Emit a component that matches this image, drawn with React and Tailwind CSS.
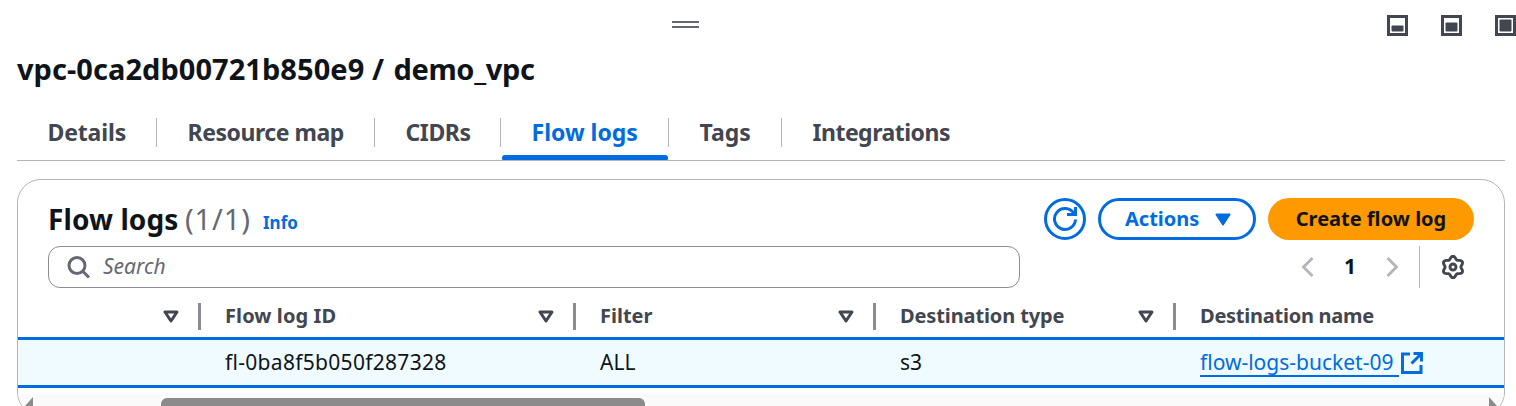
import React from "react";

const tabs = [
  { label: "Details", cell: "w-[140px]", text: "tracking-[-0.15px]" },
  { label: "Resource map", cell: "w-[218px]", text: "tracking-[-0.45px]" },
  { label: "CIDRs", cell: "w-[126px]", text: "tracking-[-0.4px]" },
  { label: "Flow logs", cell: "w-[168px]", text: "tracking-normal", active: true },
  { label: "Tags", cell: "w-[113px]", text: "tracking-normal" },
  { label: "Integrations", cell: "w-[200px]", text: "tracking-[-0.5px]" },
];

const columns = [
  { label: "Flow log ID", cell: "w-[375px]", text: "tracking-[0.1px]" },
  { label: "Filter", cell: "w-[300px]", text: "tracking-normal" },
  { label: "Destination type", cell: "w-[300px]", text: "tracking-[-0.12px]" },
];

// Six-lobed gear outline, one lobe pointing straight up.
const gearPath =
  Array.from({ length: 72 }, (_, i) => {
    const a = (i / 72) * Math.PI * 2;
    const r = 9.3 + 1.4 * Math.cos(6 * a);
    return `${i ? "L" : "M"}${(13 + r * Math.sin(a)).toFixed(2)} ${(13 - r * Math.cos(a)).toFixed(2)}`;
  }).join("") + "Z";

function PanelIcon({ top }) {
  return (
    <svg width="21" height="21" viewBox="0 0 21 21" className="shrink-0">
      <rect x="1.5" y="1.5" width="18" height="18" fill="none" stroke="#424650" strokeWidth="3" />
      <rect x="4.5" y={top} width="12" height={16.5 - top} rx="1" fill="#424650" />
    </svg>
  );
}

function SortIcon() {
  return (
    <svg width="16" height="13" viewBox="0 0 16 13" fill="none" stroke="#424650" strokeWidth="3" strokeLinejoin="round" className="mr-[19px] shrink-0">
      <path d="M2 2h12L8 11z" />
    </svg>
  );
}

function Divider() {
  return <div className="h-[27px] w-[3px] shrink-0 bg-[#8c8c94]" />;
}

export default function App() {
  return (
    <div className="h-[406px] w-[1516px] overflow-hidden bg-white font-['Noto_Sans',sans-serif] whitespace-nowrap text-[#0f141a]">
      <header className="flex h-[48px] items-start pl-[672px]">
        <div className="mt-[21px] h-[7px] w-[27px] border-t-2 border-b-2 border-[#656871]" />
        <div className="mt-[15px] ml-[688px] flex gap-[33px]">
          <PanelIcon top={10.5} />
          <PanelIcon top={7.5} />
          <PanelIcon top={4.5} />
        </div>
      </header>

      <h1 className="flex h-[42px] items-center pl-[17px] text-[29px] font-bold">
        <span className="w-[355px] tracking-[0.05px]">vpc-0ca2db00721b850e9</span>
        <span className="w-[21.5px]">/</span>
        <span className="tracking-[-0.35px]">demo_vpc</span>
      </h1>

      <nav className="mr-[11px] ml-[17px] flex h-[71px] items-end border-b border-[#b4b4bb]">
        {tabs.map((t) => (
          <div key={t.label} className={`${t.cell} flex h-[42px] shrink-0 flex-col justify-between`}>
            <div className={`flex h-[29px] items-center border-r pl-[30.5px] text-[23px] font-bold ${t.text} ${t.label === "Integrations" ? "border-transparent" : "border-[#b4b4bb]"} ${t.active ? "text-[#006ce0]" : "text-[#424650]"}`}>
              {t.label}
            </div>
            {t.active && <div className="mr-px ml-px h-[5px] rounded-t-[3px] rounded-b-[1px] bg-[#006ce0]" />}
          </div>
        ))}
      </nav>

      <section className="mt-[18px] mr-[11px] ml-[17px] h-[237px] overflow-hidden rounded-[24px] border border-[#b4b4bb]">
        <div className="mt-[18px] flex h-[42px] items-center pr-[30px] pl-[30px]">
          <h2 className="w-[137px] text-[28px] font-bold tracking-[0.1px]">Flow logs</h2>
          <span className="w-[67px] text-[29px] tracking-[0.9px] text-[#656871]">(1/1)</span>
          <span className="mt-[7px] ml-[11px] text-[17px] font-bold text-[#006ce0]">Info</span>
          <div className="ml-auto flex gap-[12px]">
            <button className="flex size-[42px] items-center justify-center rounded-full border-3 border-[#006ce0] text-[#006ce0]">
              <svg width="26" height="26" viewBox="0 0 26 26" fill="none" stroke="currentColor" strokeWidth="3">
                <path d="M23.5 13.5A10.5 10.5 0 1 1 21.8 7.2L23 9" />
                <path d="M23.5 1v7.5H15" />
              </svg>
            </button>
            <button className="flex h-[42px] w-[158px] items-center rounded-full border-3 border-[#006ce0] pl-[24px] text-[20px] font-bold text-[#006ce0]">
              <span className="w-[90px] text-left">Actions</span>
              <svg width="16" height="13" viewBox="0 0 16 13" fill="currentColor" stroke="currentColor" strokeWidth="2" strokeLinejoin="round">
                <path d="M1.5 1.5h13L8 11.5z" />
              </svg>
            </button>
            <button className="flex h-[42px] w-[206px] items-center justify-center rounded-full bg-[#ff9900] text-[20px] font-bold">Create flow log</button>
          </div>
        </div>

        <div className="mt-[6px] flex h-[42px] items-center pl-[30px]">
          <div className="flex h-[42px] w-[972px] items-center rounded-[12px] border border-[#8c8c94] pl-[18px] text-[#656871]">
            <svg width="24" height="24" viewBox="0 0 24 24" fill="none" stroke="currentColor" strokeWidth="3">
              <circle cx="10" cy="10.5" r="8" />
              <path d="M15.5 16l6.5 6.5" />
            </svg>
            <span className="ml-[12px] text-[21px] italic">Search</span>
          </div>
          <svg width="13" height="20" viewBox="0 0 13 20" fill="none" stroke="#b4b4bb" strokeWidth="2.8" className="ml-[281px]">
            <path d="M11.5 1L2.5 10l9 9" />
          </svg>
          <span className="ml-[24px] w-[24px] text-center text-[21px] font-bold">1</span>
          <svg width="13" height="20" viewBox="0 0 13 20" fill="none" stroke="#b4b4bb" strokeWidth="2.8" className="ml-[24px]">
            <path d="M1.5 1l9 9-9 9" />
          </svg>
          <div className="ml-[20px] h-[42px] w-px bg-[#b4b4bb]" />
          <svg width="26" height="26" viewBox="0 0 26 26" fill="none" stroke="#424650" strokeWidth="2.9" strokeLinejoin="round" className="ml-[20px]">
            <path d={gearPath} />
            <circle cx="13" cy="13" r="3" />
          </svg>
        </div>

        <div className="flex h-[49px] items-center pt-[7px] text-[20px] font-bold text-[#424650]">
          <div className="flex w-[183px] items-center justify-end">
            <SortIcon />
            <Divider />
          </div>
          {columns.map((c) => (
            <div key={c.label} className={`${c.cell} flex shrink-0 items-center pl-[24px]`}>
              <span className={`flex-1 ${c.text}`}>{c.label}</span>
              <SortIcon />
              <Divider />
            </div>
          ))}
          <div className="pl-[24px] tracking-[-0.25px]">Destination name</div>
        </div>

        <div className="flex h-[51px] items-center border-t-3 border-b-3 border-[#006ce0] bg-[#f0fbff] pl-[207px] text-[21px]">
          <div className="w-[375px] tracking-[0.3px]">fl-0ba8f5b050f287328</div>
          <div className="w-[300px]">ALL</div>
          <div className="w-[300px]">s3</div>
          <a className="flex items-center gap-[2px] text-[#006ce0]">
            <span className="h-[28px] w-[199px] border-b-2 border-[#006ce0] leading-[26px]">flow-logs-bucket-09</span>
            <svg width="22" height="22" viewBox="0 0 22 22" fill="none" stroke="currentColor" strokeWidth="3">
              <path d="M9 2H1.5v18.5H20V13" />
              <path d="M12.5 1.5h8v8M20 2L10.5 11.5" />
            </svg>
          </a>
        </div>

        <div className="mt-[6px] flex h-[22px] items-start bg-[#fafafa] pt-[3px]">
          <svg width="8" height="18" viewBox="0 0 8 18" className="ml-[7px]"><path d="M8 0v18L0 9z" fill="#8b8b8b" /></svg>
          <div className="mt-px ml-[128px] h-[15px] w-[484px] rounded-[6px] bg-[#8b8b8b]" />
          <svg width="8" height="18" viewBox="0 0 8 18" className="ml-[844px]"><path d="M0 0v18L8 9z" fill="#8b8b8b" /></svg>
        </div>
      </section>
    </div>
  );
}
